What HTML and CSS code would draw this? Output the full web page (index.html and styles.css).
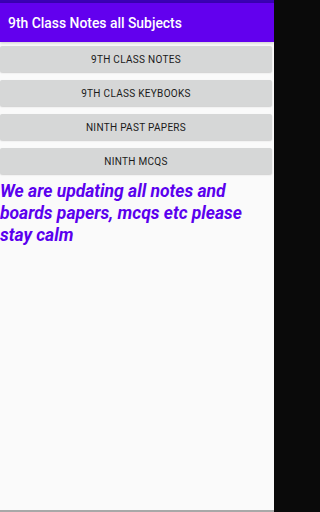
FILE: index.html
```html
<!DOCTYPE html>
<html>
<head>
<meta charset="utf-8">
<link rel="stylesheet" href="styles.css">
</head>
<body>
<div class="screen">
  <div class="main">
    <div class="statusbar"></div>
    <div class="appbar">9th Class Notes all Subjects</div>
    <div class="content">
      <div class="buttons">
        <div class="btn">9th Class Notes</div>
        <div class="btn">9th Class Keybooks</div>
        <div class="btn">Ninth Past Papers</div>
        <div class="btn">Ninth MCQS</div>
      </div>
      <p class="message">We are updating all notes and boards papers, mcqs etc please stay calm</p>
    </div>
    <div class="bottomline"></div>
  </div>
  <div class="edge"></div>
</div>
</body>
</html>
```

FILE: styles.css
```css
html, body {
  margin: 0;
  padding: 0;
}
html {
  background: #0a0a0a;
}
body {
  width: 277px;
  height: 512px;
  overflow: hidden;
  font-family: Roboto, "Liberation Sans", sans-serif;
  background: #fafafa;
}
.screen {
  display: grid;
  grid-template-columns: 274px 3px;
  height: 512px;
}
.main {
  display: flex;
  flex-direction: column;
  height: 512px;
  background: #fafafa;
}
.edge {
  background: #0a0a0a;
}
.statusbar {
  height: 3px;
  background: #3a00b4;
}
.appbar {
  height: 39px;
  background: #6200ee;
  color: #ffffff;
  font-size: 13.9px;
  font-weight: 500;
  display: flex;
  align-items: center;
  padding-left: 8px;
  box-shadow: 0 1px 3px rgba(0,0,0,0.2);
}
.content {
  flex: 1;
  padding-top: 4px;
}
.buttons {
  display: flex;
  flex-direction: column;
  gap: 8px;
  width: 272px;
}
.btn {
  height: 26px;
  background: #d6d7d7;
  border-radius: 2px;
  display: flex;
  align-items: center;
  justify-content: center;
  text-transform: uppercase;
  font-size: 10px;
  font-weight: 400;
  letter-spacing: 0.03em;
  color: #1a1a1a;
  box-shadow: 0 1px 1.5px rgba(0,0,0,0.18);
}
.message {
  margin: 6px 0 0 0;
  font-size: 17.5px;
  line-height: 22px;
  font-weight: 700;
  font-style: italic;
  color: #5a00ee;
  padding-right: 8px;
}
.bottomline {
  height: 2px;
  background: #a8a8a8;
}
```
